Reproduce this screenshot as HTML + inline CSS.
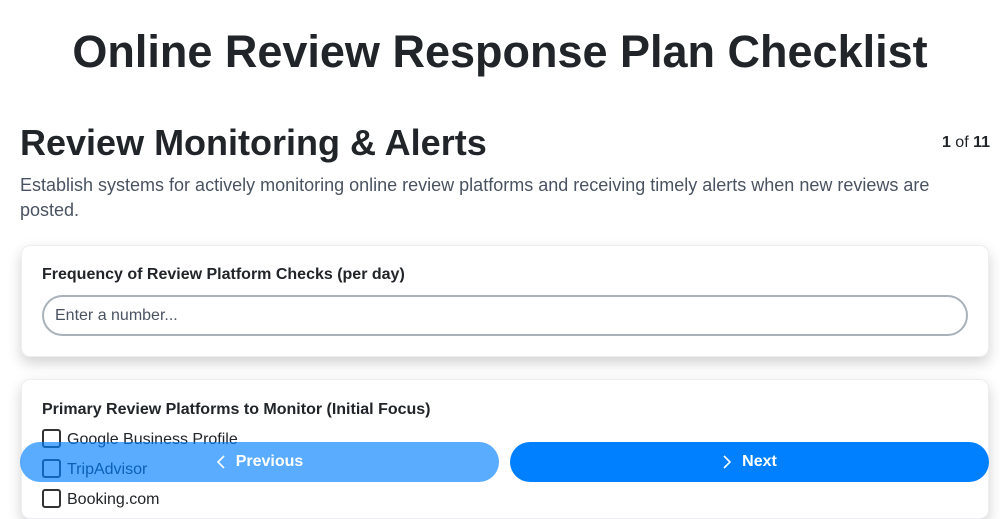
<!DOCTYPE html>
<html><head><style>
*{box-sizing:border-box;margin:0;padding:0}
body{width:1000px;height:500px;overflow:hidden;background:#fff;font-family:"Liberation Sans",sans-serif;color:#212529;position:relative}
h1{position:absolute;top:26px;left:0;width:1000px;text-align:center;font-size:45px;font-weight:bold;color:#212529}
h2{position:absolute;top:122px;left:20px;font-size:36px;font-weight:bold}
.pg{position:absolute;top:134px;right:10px;font-size:16px}
.desc{position:absolute;top:173px;left:20px;width:940px;font-size:18px;line-height:25px;color:#4a5361}
.card{position:absolute;left:21px;width:968px;background:#fff;border-radius:9px;box-shadow:0 6px 14px rgba(0,0,0,.18);border:1px solid #eceef2}
.lbl{position:absolute;left:20px;font-size:16px;font-weight:bold}
.inp{position:absolute;left:20px;top:49px;width:926px;height:41px;border:2px solid #a9b1ba;border-radius:21px;font-size:16px;color:#4a5361;padding:10px 11px}
.cb{position:absolute;left:20px;font-size:16px;line-height:18px}
.cb span{display:inline-block;width:19px;height:19px;border:2px solid #333;border-radius:3px;vertical-align:-4px;margin-right:6px}
.btn{position:absolute;top:442px;height:40px;border-radius:20px;color:#fff;font-size:16px;font-weight:bold;display:flex;align-items:center;justify-content:center;gap:10px}
</style></head><body>
<h1>Online Review Response Plan Checklist</h1>
<h2>Review Monitoring &amp; Alerts</h2>
<div class="pg"><b>1</b> of <b>11</b></div>
<div class="desc">Establish systems for actively monitoring online review platforms and receiving timely alerts when new reviews are posted.</div>
<div class="card" style="top:245px;height:112px">
<div class="lbl" style="top:20px">Frequency of Review Platform Checks (per day)</div>
<div class="inp">Enter a number...</div>
</div>
<div class="card" style="top:379px;height:140px">
<div class="lbl" style="top:21px">Primary Review Platforms to Monitor (Initial Focus)</div>
<div class="cb" style="top:49px"><span></span>Google Business Profile</div>
<div class="cb" style="top:79px"><span></span>TripAdvisor</div>
<div class="cb" style="top:109px"><span></span>Booking.com</div>
</div>
<div class="btn" style="left:20px;width:479px;background:rgba(0,128,255,.65)"><svg width="10" height="16" viewBox="0 0 10 16"><path d="M8 2L2 8l6 6" stroke="#fff" stroke-width="1.6" fill="none"/></svg>Previous</div>
<div class="btn" style="left:510px;width:479px;background:#0080ff"><svg width="10" height="16" viewBox="0 0 10 16"><path d="M2 2l6 6-6 6" stroke="#fff" stroke-width="1.6" fill="none"/></svg>Next</div>
</body></html>
